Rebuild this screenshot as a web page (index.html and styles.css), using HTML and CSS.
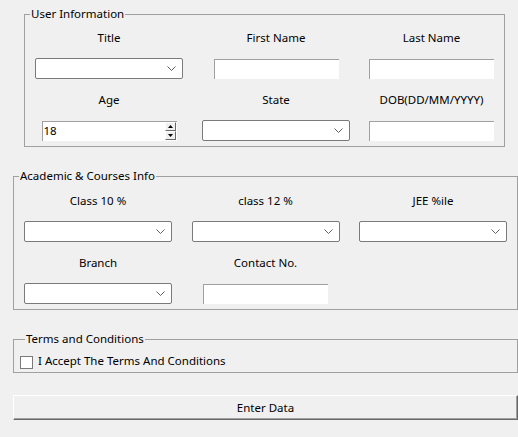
FILE: index.html
```html
<!DOCTYPE html>
<html lang="en">
<head>
<meta charset="utf-8">
<title>Data Entry Form</title>
<link rel="stylesheet" href="styles.css">
</head>
<body>
<form class="app">
  <fieldset class="group group-user">
    <legend class="group-title">User Information</legend>
    <div class="grid grid-user">
      <span class="lbl">Title</span>
      <span class="lbl">First Name</span>
      <span class="lbl">Last Name</span>

      <div class="combo"><svg class="chev" width="9" height="5" viewBox="0 0 9 5"><polyline points="0.5,0.5 4.5,4.5 8.5,0.5"/></svg></div>
      <input class="entry" type="text">
      <input class="entry" type="text">

      <span class="lbl">Age</span>
      <span class="lbl">State</span>
      <span class="lbl">DOB(DD/MM/YYYY)</span>

      <div class="spin">
        <input class="spin-text" type="text" value="18">
        <div class="spin-btns">
          <span class="spin-btn"><svg width="5" height="3" viewBox="0 0 5 3"><polygon points="2.5,0 5,3 0,3"/></svg></span>
          <span class="spin-btn"><svg width="5" height="3" viewBox="0 0 5 3"><polygon points="0,0 5,0 2.5,3"/></svg></span>
        </div>
      </div>
      <div class="combo"><svg class="chev" width="9" height="5" viewBox="0 0 9 5"><polyline points="0.5,0.5 4.5,4.5 8.5,0.5"/></svg></div>
      <input class="entry" type="text">
    </div>
  </fieldset>

  <fieldset class="group group-wide">
    <legend class="group-title">Academic &amp; Courses Info</legend>
    <div class="grid grid-academic">
      <span class="lbl">Class 10 %</span>
      <span class="lbl">class 12 %</span>
      <span class="lbl">JEE %ile</span>

      <div class="combo"><svg class="chev" width="9" height="5" viewBox="0 0 9 5"><polyline points="0.5,0.5 4.5,4.5 8.5,0.5"/></svg></div>
      <div class="combo"><svg class="chev" width="9" height="5" viewBox="0 0 9 5"><polyline points="0.5,0.5 4.5,4.5 8.5,0.5"/></svg></div>
      <div class="combo"><svg class="chev" width="9" height="5" viewBox="0 0 9 5"><polyline points="0.5,0.5 4.5,4.5 8.5,0.5"/></svg></div>

      <span class="lbl">Branch</span>
      <span class="lbl">Contact No.</span>
      <span></span>

      <div class="combo"><svg class="chev" width="9" height="5" viewBox="0 0 9 5"><polyline points="0.5,0.5 4.5,4.5 8.5,0.5"/></svg></div>
      <input class="entry" type="text">
      <span></span>
    </div>
  </fieldset>

  <fieldset class="group group-wide group-terms">
    <legend class="group-title">Terms and Conditions</legend>
    <label class="check">
      <span class="check-box"></span>
      <span class="check-text">I Accept The Terms And Conditions</span>
    </label>
  </fieldset>

  <button class="btn" type="button">Enter Data</button>
</form>
</body>
</html>
```

FILE: styles.css
```css
html, body {
  margin: 0;
  padding: 0;
  background: #f0f0f0;
}

body {
  font-family: "Noto Sans", "Open Sans", sans-serif;
  font-size: 11.5px;
  line-height: 16px;
  color: #000;
  width: 518px;
  height: 437px;
  overflow: hidden;
}

.app {
  display: flex;
  flex-direction: column;
  padding-top: 6px;
}

.group {
  margin: 0;
  padding: 0;
  min-width: 0;
  border: 1px solid #a0a0a0;
  box-sizing: border-box;
}

.group-title {
  margin-left: 5px;
  padding: 0 1px;
  line-height: 16px;
  height: 16px;
}

.group-user {
  margin-left: 24px;
  width: 481px;
}

.group-wide {
  margin-left: 13px;
  width: 505px;
  margin-top: 21px;
}

.grid {
  display: grid;
  grid-auto-rows: 31px;
  justify-items: center;
  align-items: center;
}

.grid-user {
  grid-template-columns: 168px 166px 145px;
}

.grid-academic {
  grid-template-columns: 168px 167px 168px;
  padding-top: 1px;
}

.lbl {
  white-space: nowrap;
}

.combo {
  width: 148px;
  height: 21px;
  box-sizing: border-box;
  background: #fff;
  border: 1px solid #7a7a7a;
  border-radius: 2px;
  display: flex;
  align-items: center;
  justify-content: flex-end;
  padding-right: 6px;
}

.chev {
  display: block;
  fill: none;
  stroke: #606060;
  stroke-width: 1;
}

.entry {
  width: 125px;
  height: 20px;
  box-sizing: border-box;
  margin: 0;
  padding: 0 2px;
  background: #fff;
  border: 0;
  border-top: 1px solid #a0a0a0;
  border-left: 1px solid #a0a0a0;
  font: inherit;
  outline: none;
}

.spin {
  width: 135px;
  height: 20px;
  box-sizing: border-box;
  background: #fff;
  border-top: 1px solid #a0a0a0;
  border-left: 1px solid #a0a0a0;
  display: flex;
}

.spin-text {
  flex: 1;
  min-width: 0;
  margin: 0;
  padding: 0 1px;
  border: 0;
  background: transparent;
  font: inherit;
  outline: none;
}

.spin-btns {
  width: 11px;
  display: flex;
  flex-direction: column;
  margin: 0 1px 1px 0;
}

.spin-btn {
  flex: 1;
  box-sizing: border-box;
  background: #f0f0f0;
  border-top: 1px solid #fff;
  border-left: 1px solid #fff;
  border-right: 1px solid #696969;
  border-bottom: 1px solid #696969;
  display: flex;
  align-items: center;
  justify-content: center;
}

.spin-btn svg {
  display: block;
  fill: #000;
}

.group-terms {
  padding: 6px 0 3px 6px;
}

.check {
  display: flex;
  align-items: center;
  height: 16px;
}

.check-box {
  width: 13px;
  height: 13px;
  box-sizing: border-box;
  border: 1px solid #7a7a7a;
  background: #fff;
  margin-top: 3px;
  margin-right: 5px;
}

.btn {
  margin: 22px 0 0 13px;
  width: 505px;
  height: 25px;
  box-sizing: border-box;
  padding: 0;
  background: #f0f0f0;
  border-top: 1px solid #fff;
  border-left: 1px solid #fff;
  border-right: 1px solid #696969;
  border-bottom: 1px solid #696969;
  box-shadow: inset -1px -1px 0 #a0a0a0;
  font: inherit;
  color: #000;
}
```
